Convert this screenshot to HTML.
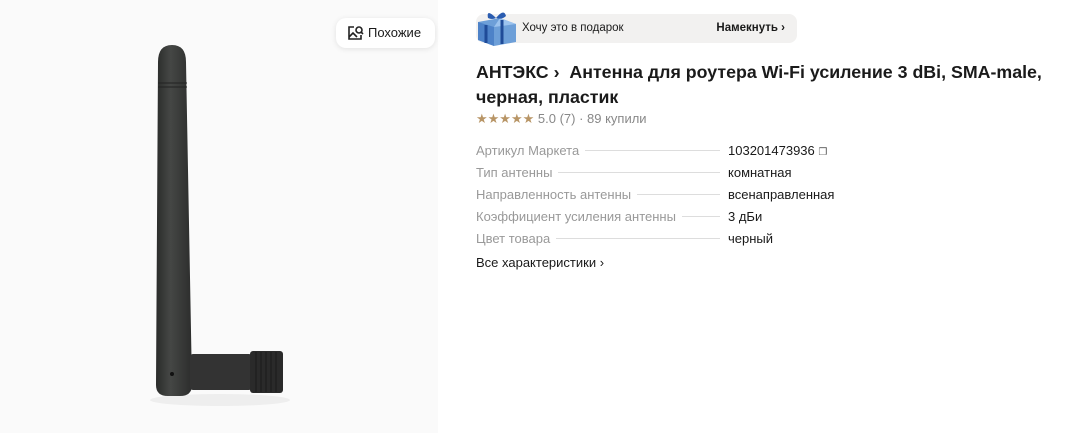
<!DOCTYPE html>
<html><head><meta charset="utf-8"><style>
*{margin:0;padding:0;box-sizing:border-box}
body{width:1080px;height:433px;background:#fff;font-family:"Liberation Sans",Arial,sans-serif;position:relative;overflow:hidden;color:#1a1a1a}
.img{position:absolute;left:0;top:0;width:438px;height:433px;background:#fafafa}
.btn{position:absolute;left:336px;top:18px;width:99px;height:30px;background:#fff;border-radius:10px;box-shadow:0 1px 6px rgba(0,0,0,.1);font-size:13px;line-height:30px;padding-left:32px}
.gift{position:absolute;left:476px;top:14px;width:321px;height:29px;background:#f2f1f0;border-radius:8px;font-size:11.5px;line-height:29px}
.title{position:absolute;left:476px;top:60px;font-size:17.8px;line-height:25px;font-weight:bold;width:590px}
.rate{position:absolute;left:476px;top:111px;font-size:13px;color:#888}
.rows{position:absolute;left:476px;top:143px;width:370px;font-size:13px}
.row{display:flex;height:22px;align-items:baseline}
.k{color:#999;flex:0 0 auto}
.d{flex:1;border-bottom:1px solid #ddd;margin:0 8px 0 6px;position:relative;top:-4px}
.v{width:118px}
.all{position:absolute;left:476px;top:255px;font-size:13px}
</style></head><body>
<div class="img">
<svg width="438" height="433" viewBox="0 0 438 433">
<defs><linearGradient id="g" x1="0" x2="1"><stop offset="0" stop-color="#2a2b2a"/><stop offset=".4" stop-color="#454745"/><stop offset="1" stop-color="#2c2d2c"/></linearGradient></defs>
<ellipse cx="220" cy="400" rx="70" ry="6" fill="#eee"/>
<path d="M158 62 Q158 45 172 45 Q186 45 186 62 L192 385 Q192 396 180 396 L168 396 Q156 396 156 385 Z" fill="url(#g)"/>
<line x1="158" y1="83" x2="187" y2="83" stroke="#222" stroke-width="1"/>
<line x1="158" y1="87" x2="187" y2="87" stroke="#222" stroke-width="1"/>
<circle cx="172" cy="374" r="2" fill="#111"/>
<rect x="190" y="354" width="62" height="36" rx="3" fill="#333"/>
<rect x="250" y="351" width="33" height="42" rx="3" fill="#2a2a2a"/>
<g stroke="#1a1a1a" stroke-width="1"><line x1="256" y1="352" x2="256" y2="392"/><line x1="261" y1="352" x2="261" y2="392"/><line x1="266" y1="352" x2="266" y2="392"/><line x1="271" y1="352" x2="271" y2="392"/><line x1="276" y1="352" x2="276" y2="392"/></g>
</svg>
</div>
<div class="btn"><svg style="position:absolute;left:11px;top:7px" width="17" height="16" viewBox="0 0 17 16" fill="none" stroke="#222" stroke-width="1.6"><path d="M7 2H2v12h12v-4"/><path d="M2 12l4-4 4 4"/><circle cx="12" cy="5" r="3"/><path d="M14 7l2 2"/></svg>Похожие</div>
<div class="gift">
<svg style="position:absolute;left:-2px;top:-6px" width="46" height="38" viewBox="0 0 46 38"><path d="M4 14 L26 10 L42 16 L42 34 L20 38 L4 32Z" fill="#6d9fd8"/><path d="M4 14 L20 19 L20 38 L4 32Z" fill="#4d82c8"/><path d="M20 19 L42 16 L26 10Z" fill="#9cc3ee"/><path d="M12 17 L12 35" stroke="#1f4b98" stroke-width="3"/><path d="M28 12 L28 36" stroke="#1f4b98" stroke-width="3"/><path d="M22 10 Q12 0 14 10 Q18 12 22 10 Q30 0 32 8 Q28 12 22 10" fill="#2a5cb0"/></svg>
<span style="position:absolute;left:46px">Хочу это в подарок</span>
<span style="position:absolute;right:12px;font-weight:bold">Намекнуть ›</span></div>
<div class="title">АНТЭКС ›&nbsp; Антенна для роутера Wi-Fi усиление 3 dBi, SMA-male, черная, пластик</div>
<div class="rate"><span style="color:#b89566">★★★★★</span> 5.0 (7) · 89 купили</div>
<div class="rows">
<div class="row"><span class="k">Артикул Маркета</span><span class="d"></span><span class="v">103201473936 <span style="font-size:10px;color:#555">❐</span></span></div>
<div class="row"><span class="k">Тип антенны</span><span class="d"></span><span class="v">комнатная</span></div>
<div class="row"><span class="k">Направленность антенны</span><span class="d"></span><span class="v">всенаправленная</span></div>
<div class="row"><span class="k">Коэффициент усиления антенны</span><span class="d"></span><span class="v">3 дБи</span></div>
<div class="row"><span class="k">Цвет товара</span><span class="d"></span><span class="v">черный</span></div>
</div>
<div class="all">Все характеристики ›</div>
</body></html>
